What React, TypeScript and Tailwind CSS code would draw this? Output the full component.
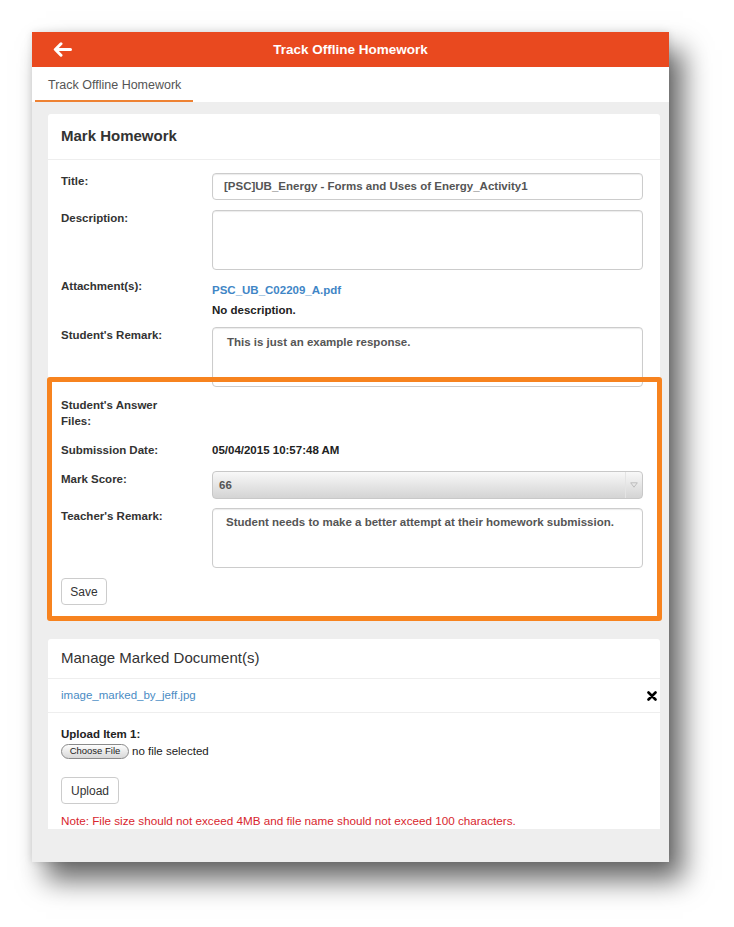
import React from "react";

const labelCls =
  "w-[110px] mr-[41px] shrink-0 text-[11.5px] font-bold leading-[16px] text-[#333]";
const inputBox =
  "border border-[#cccccc] rounded-[4px] bg-white shadow-[inset_0_1px_1px_rgba(0,0,0,0.08)]";

function Row({
  label,
  className = "",
  children,
}: {
  label: React.ReactNode;
  className?: string;
  children?: React.ReactNode;
}) {
  return (
    <div className={"flex items-start " + className}>
      <div className={labelCls}>{label}</div>
      <div className="flex-1 min-w-0">{children}</div>
    </div>
  );
}

export default function App() {
  return (
    <div className="w-[734px] h-[927px] bg-white pt-[32px] pl-[32px] font-['Liberation_Sans',Arial,sans-serif]">
      <div className="w-[637px] h-[830px] bg-[#eeeeee] overflow-hidden shadow-[14px_18px_26px_rgba(0,0,0,0.6),0_0_8px_rgba(0,0,0,0.12)] flex flex-col">
        {/* Top bar */}
        <header className="h-[35px] shrink-0 bg-[#e9491f] grid grid-cols-[60px_1fr_60px] items-center">
          <div className="pl-[21px] flex items-center">
            <svg width="19" height="15" viewBox="0 0 19 15" fill="none">
              <path
                d="M8 1.8 L2.3 7.5 L8 13.2 M2.5 7.5 H17.5"
                stroke="white"
                strokeWidth="3"
                strokeLinecap="round"
                strokeLinejoin="round"
              />
            </svg>
          </div>
          <div className="pt-[1px] text-center text-white font-bold text-[13.5px]">
            Track Offline Homework
          </div>
          <div />
        </header>

        {/* Tab bar */}
        <nav className="h-[35px] shrink-0 bg-white flex">
          <div className="ml-[3px] w-[158px] border-b-2 border-[#ee8233] pl-[13px] pt-[3px] flex items-center text-[12.5px] text-[#555]">
            Track Offline Homework
          </div>
        </nav>

        <main className="pl-[16px] pr-[9px] pt-[12px]">
          {/* Mark Homework card */}
          <section className="relative bg-white rounded-[3px]">
            <div className="h-[46px] flex items-center px-[13px] border-b border-[#eeeeee] text-[15px] font-bold text-[#333]">
              Mark Homework
            </div>
            <div className="pl-[13px] pr-[17px] pt-[13px] pb-[14px]">
              <Row label="Title:">
                <div
                  className={
                    inputBox +
                    " h-[27px] flex items-center pl-[11px] text-[11.5px] font-bold text-[#555] whitespace-nowrap"
                  }
                >
                  [PSC]UB_Energy - Forms and Uses of Energy_Activity1
                </div>
              </Row>
              <Row label="Description:" className="mt-[10px]">
                <div className={inputBox + " h-[60px]"} />
              </Row>
              <Row label="Attachment(s):" className="mt-[8px]">
                <div className="pt-[4px] text-[11.5px] font-bold leading-[16px]">
                  <div className="text-[#3f86c6]">PSC_UB_C02209_A.pdf</div>
                  <div className="mt-[4px] text-[#222]">No description.</div>
                </div>
              </Row>
              <Row label="Student's Remark:" className="mt-[9px]">
                <div
                  className={
                    inputBox +
                    " h-[60px] pl-[14px] pt-[6px] text-[11.5px] font-bold leading-[16px] text-[#555]"
                  }
                >
                  This is just an example response.
                </div>
              </Row>
              <Row label={<>Student's Answer<br />Files:</>} className="mt-[10px]" />
              <Row label="Submission Date:" className="mt-[13px]">
                <div className="text-[11.5px] font-bold leading-[16px] text-[#222]">
                  05/04/2015 10:57:48 AM
                </div>
              </Row>
              <Row label="Mark Score:" className="mt-[13px]">
                <div className="h-[28px] rounded-[4px] border border-[#c8c8c8] bg-linear-to-b from-[#f8f8f8] to-[#d4d4d4] flex">
                  <div className="flex-1 flex items-center pl-[6px] pt-[2px] text-[11.5px] font-bold text-[#555]">
                    66
                  </div>
                  <div className="w-[17px] border-l border-[#e4e4e4] flex items-center justify-center">
                    <svg width="8" height="6" viewBox="0 0 8 6">
                      <path
                        d="M0.7 0.8 L4 5.2 L7.3 0.8 Z"
                        fill="none"
                        stroke="#bdbdbd"
                        strokeWidth="1"
                      />
                    </svg>
                  </div>
                </div>
              </Row>
              <Row label="Teacher's Remark:" className="mt-[9px]">
                <div
                  className={
                    inputBox +
                    " h-[60px] pl-[13px] pt-[5px] text-[11.5px] font-bold leading-[16px] text-[#555]"
                  }
                >
                  Student needs to make a better attempt at their homework submission.
                </div>
              </Row>
              <button className="mt-[10px] h-[27px] w-[46px] rounded-[4px] border border-[#cccccc] bg-white text-[12px] text-[#333] flex items-center justify-center">
                Save
              </button>
            </div>
            {/* highlight overlay */}
            <div className="pointer-events-none absolute top-[263px] left-[-1px] right-[-2px] bottom-[-2px] border-[5px] border-[#f7831f] rounded-[3px]" />
          </section>

          {/* Manage Marked Documents card */}
          <section className="mt-[20px] bg-white rounded-t-[3px]">
            <div className="h-[40px] flex items-center px-[13px] border-b border-[#eeeeee] text-[15px] text-[#333]">
              Manage Marked Document(s)
            </div>
            <div className="h-[34px] flex items-center justify-between pl-[13px] pr-[3px] border-b border-[#eeeeee]">
              <span className="text-[11.5px] text-[#4a8cc4]">image_marked_by_jeff.jpg</span>
              <svg width="10" height="10" viewBox="0 0 10 10">
                <path
                  d="M1.5 1.5 L8.5 8.5 M8.5 1.5 L1.5 8.5"
                  stroke="#000"
                  strokeWidth="2.6"
                  strokeLinecap="round"
                />
              </svg>
            </div>
            <div className="pl-[13px] pt-[13px]">
              <div className="text-[11.5px] font-bold leading-[16px] text-[#222]">
                Upload Item 1:
              </div>
              <div className="mt-[2px] h-[15px] flex items-center">
                <div className="h-[15px] w-[68px] rounded-full border border-[#8a8a8a] bg-linear-to-b from-[#fdfdfd] to-[#d8d8d8] flex items-center justify-center text-[9.5px] text-[#222]">
                  Choose File
                </div>
                <span className="ml-[3px] text-[11.5px] leading-[15px] text-[#222]">no file selected</span>
              </div>
              <button className="mt-[18px] h-[27px] w-[58px] rounded-[4px] border border-[#cccccc] bg-white text-[12px] text-[#333] flex items-center justify-center">
                Upload
              </button>
              <div className="mt-[9px] text-[11.7px] leading-[16px] text-[#d8262e]">
                Note: File size should not exceed 4MB and file name should not exceed 100 characters.
              </div>
            </div>
          </section>
        </main>
      </div>
    </div>
  );
}
